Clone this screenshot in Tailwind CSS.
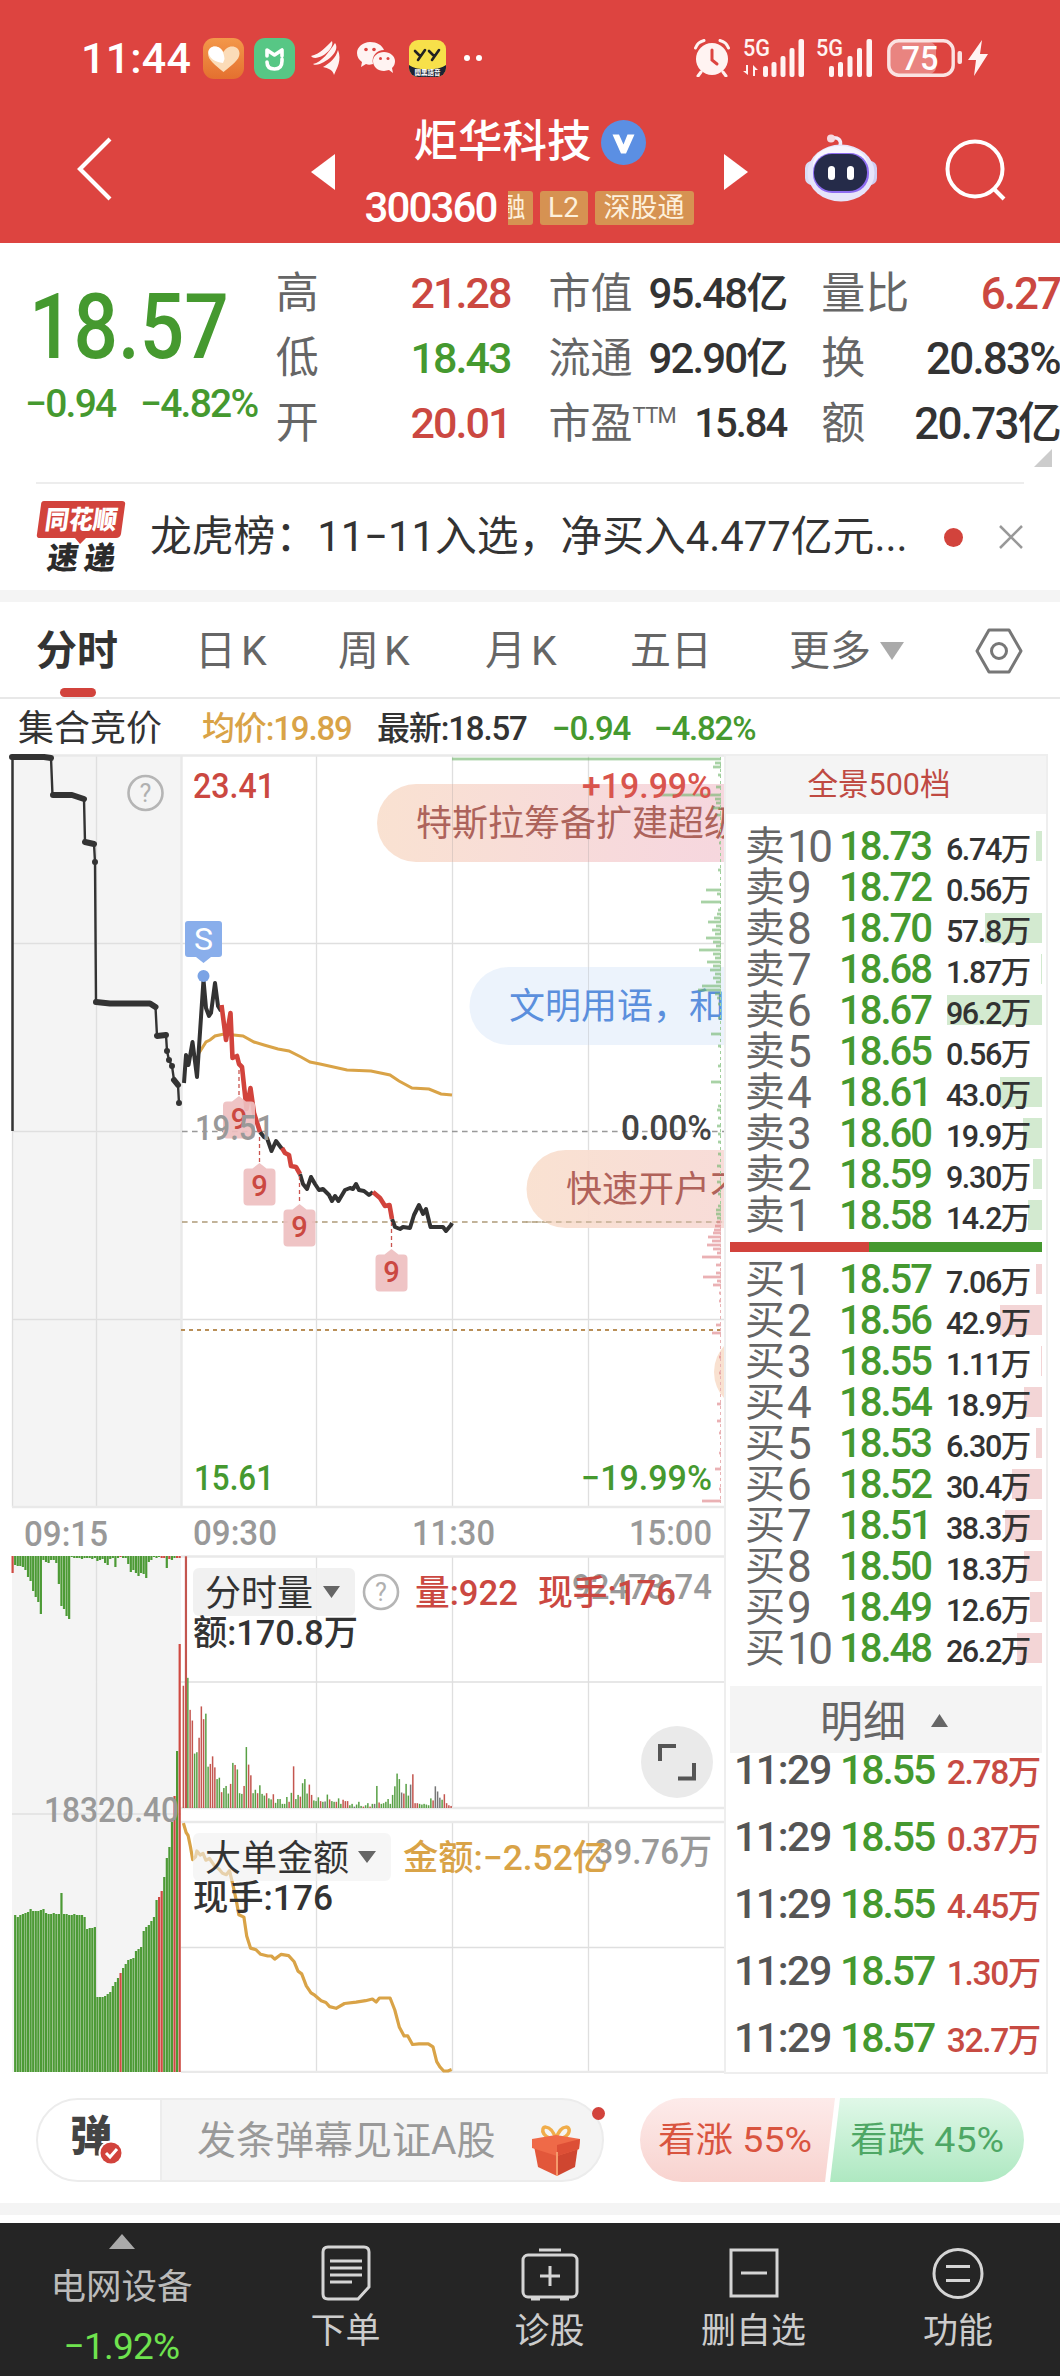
<!DOCTYPE html>
<html lang="zh-CN">
<head>
    <meta charset="UTF-8">
    <meta name="viewport" content="width=device-width, initial-scale=1.0">
    <title>炬华科技 300360</title>
    <script src="https://cdn.jsdelivr.net/npm/@tailwindcss/browser@4"></script>
    <style>
        body {
            font-family: Roboto, 'Noto Sans CJK SC', sans-serif;
        }
    </style>
</head>
<body class="w-[1060px] bg-white text-[#333] leading-none whitespace-nowrap overflow-x-hidden">

    <!-- Header -->
    <header class="h-[243px] bg-[#dd4440] text-white flex flex-col">
        <!-- Status bar -->
        <div class="h-[116px] pl-[81px] pr-[72px] flex items-center justify-between">
            <div class="flex items-center">
                <span class="w-[122px] text-[43px] font-medium tracking-[0.005em]">11:44</span>
                <svg class="w-[41px] h-[41px]" viewBox="0 0 41 41">
                    <defs><linearGradient id="heartBg" x1="0" y1="0" x2="0" y2="1"><stop offset="0" stop-color="#f3984a"/><stop offset="1" stop-color="#e4702f"/></linearGradient></defs>
                    <rect width="41" height="41" rx="11" fill="url(#heartBg)"/>
                    <path d="M20.500 34C12 27 5 22 5 15.500C5 11 8 8.500 12 8.500C16 8.500 19 11 20.500 14C22 11 25 8.500 29 8.500C33 8.500 36.500 11 36.500 15.500C36.500 22 29 27 20.500 34Z" fill="#fbdcb8"/>
                    <path d="M5.500 14C6 10 9 8.500 12 8.500C17 8.500 21 13 21.500 21L20 25C12 24 5.500 20 5.500 14Z" fill="#fff"/>
                </svg>
                <svg class="ml-[10px] w-[41px] h-[41px]" viewBox="0 0 41 41">
                    <rect width="41" height="41" rx="11" fill="#57c785"/>
                    <path d="M13 18V12L20.500 17L28 12V18M13 24C13 29 16 31 20.500 31C25.500 31 28 28 28 23V21" fill="none" stroke="#fff" stroke-width="3.600" stroke-linecap="round" stroke-linejoin="round"/>
                </svg>
                <svg class="ml-[15px] w-[32px] h-[36px]" viewBox="0 0 32 36" fill="#fff3f2">
                    <path d="M1 16C10 14 16 7 22 1C24 6 18 13 12 16C8 18 3 19 1 16ZM3 24C12 22 19 12 25 3C30 10 20 19 14 22C10 24 6 26 3 24ZM13 27C20 23 26 18 28 10C32 20 27 28 24 35C23 30 18 28 13 27Z"/>
                </svg>
                <svg class="ml-[15px] w-[38px] h-[34px]" viewBox="0 0 38 34" fill="#fff3f2">
                    <path d="M13 1C6 1 0 6 0 12C0 16 2 19 5 21L4 26L9 23C11 24 13 24 16 23C14 15 20 9 27 9C25 4 20 1 13 1Z"/>
                    <path d="M27 11C21 11 16 15 16 20C16 26 21 30 27 30L32 29L36 32L35 27C37 25 38 23 38 20C38 15 33 11 27 11Z"/>
                    <g fill="#dd4440"><circle cx="9" cy="8.500" r="1.800"/><circle cx="17" cy="8.500" r="1.800"/><circle cx="23.500" cy="17.500" r="1.500"/><circle cx="31" cy="17.500" r="1.500"/></g>
                </svg>
                <svg class="ml-[14px] w-[37px] h-[37px]" viewBox="0 0 37 37">
                    <defs><clipPath id="yyClip"><rect width="37" height="37" rx="9"/></clipPath></defs>
                    <g clip-path="url(#yyClip)">
                        <rect width="37" height="37" fill="#f7e04a"/>
                        <path d="M0 25C8 31 29 31 37 25V37H0Z" fill="#1c2233"/>
                    </g>
                    <path d="M6 11L11 16M16 10L9 20M20 11L25 16M30 10L23 20" stroke="#222" stroke-width="2.600" stroke-linecap="round" fill="none"/>
                    <text x="18.500" y="35" font-size="6.500" fill="#fff" text-anchor="middle" font-weight="700">開黑語音</text>
                </svg>
                <div class="ml-[18px] flex gap-[6px]">
                    <i class="w-[6px] h-[6px] rounded-full bg-white"></i>
                    <i class="w-[6px] h-[6px] rounded-full bg-white"></i>
                </div>
            </div>
            <div class="flex items-center">
                <svg class="w-[36px] h-[38px]" viewBox="0 0 36 38">
                    <circle cx="18" cy="20" r="16" fill="#fff3f2"/>
                    <path d="M1.500 9C3 5 6 2.500 10 1.500M34.500 9C33 5 30 2.500 26 1.500M7 33L4 37M29 33L32 37" stroke="#fff3f2" stroke-width="3" stroke-linecap="round"/>
                    <path d="M18 11V21L23 25" stroke="#dd4440" stroke-width="3" fill="none" stroke-linecap="round"/>
                </svg>
                <svg class="ml-[13px] w-[62px] h-[38px] overflow-visible" viewBox="0 0 62 38" fill="#fff3f2">
                    <text x="0" y="17" font-size="23" font-weight="500" textLength="27" lengthAdjust="spacingAndGlyphs">5G</text>
                    <path d="M5 26V36L0 32H3V26ZM10 37V26L15 31H12V37Z"/>
                    <rect x="20" y="27" width="5" height="11" rx="2"/><rect x="28.500" y="23" width="5" height="15" rx="2"/><rect x="37.500" y="17" width="5" height="21" rx="2"/><rect x="46.500" y="9" width="5" height="29" rx="2"/><rect x="55.500" y="0" width="5.500" height="38" rx="2"/>
                </svg>
                <svg class="ml-[11px] w-[58px] h-[38px] overflow-visible" viewBox="0 0 58 38" fill="#fff3f2">
                    <text x="0" y="17" font-size="23" font-weight="500" textLength="27" lengthAdjust="spacingAndGlyphs">5G</text>
                    <rect x="13" y="27" width="5" height="11" rx="2"/><rect x="22" y="23" width="5" height="15" rx="2"/><rect x="31.500" y="17" width="5" height="21" rx="2"/><rect x="41" y="9" width="5" height="29" rx="2"/><rect x="50.500" y="0" width="5.500" height="38" rx="2"/>
                </svg>
                <svg class="ml-[13px] w-[77px] h-[38px]" viewBox="0 0 77 38">
                    <rect x="3" y="3" width="46" height="32" rx="7" fill="#e98480"/>
                    <rect x="1.800" y="1.800" width="64.400" height="34.400" rx="10" fill="none" stroke="#fbe3e2" stroke-width="3.400"/>
                    <rect x="70.500" y="12" width="4.500" height="13" rx="2" fill="#fbe3e2"/>
                    <text x="33" y="30.500" text-anchor="middle" font-size="33" font-weight="500" fill="#fff" textLength="37" lengthAdjust="spacingAndGlyphs">75</text>
                </svg>
                <svg class="ml-[4px] w-[20px] h-[36px]" viewBox="0 0 20 36" fill="#fff3f2"><path d="M14 0L0 20H8L6 36L20 14H12Z"/></svg>
            </div>
        </div>
        <!-- Title bar -->
        <div class="h-[127px] flex items-center">
            <svg class="ml-[76px] mt-[-22px] w-[38px] h-[66px]" viewBox="0 0 38 66"><path d="M34 3L4 33L34 63" fill="none" stroke="#fff" stroke-width="4.200"/></svg>
            <svg class="ml-[197px] mt-[-16px] w-[24px] h-[36px]" viewBox="0 0 24 36"><path d="M24 0V36L0 18Z" fill="#fff"/></svg>
            <div class="w-[388px] h-full flex flex-col items-center">
                <div class="mt-[3px] ml-[1px] h-[46px] flex items-center gap-[9px]">
                    <span class="text-[44.500px] font-medium">炬华科技</span>
                    <svg class="w-[45px] h-[45px]" viewBox="0 0 45 45"><circle cx="22.500" cy="22.500" r="22.500" fill="#5b8fe3"/><path d="M11.500 14.500H18L22.500 24.500L26.500 14.500H33.500L25 33.500H20Z" fill="#fff"/></svg>
                </div>
                <div class="mt-[22px] flex items-center text-[#fdf0dc]">
                    <span class="w-[143px] text-[42px] text-white font-medium tracking-[-0.045em]">300360</span>
                    <span class="w-[25px] h-[34px] bg-[#d69252] rounded-r-[3px] overflow-hidden flex items-center text-[27px]"><b class="ml-[-9px] font-normal">融</b></span>
                    <span class="ml-[7px] w-[48px] h-[34px] bg-[#d69252] rounded-[3px] flex items-center justify-center text-[28px]">L2</span>
                    <span class="ml-[7px] w-[99px] h-[34px] bg-[#d69252] rounded-[3px] flex items-center justify-center text-[27px]">深股通</span>
                </div>
            </div>
            <svg class="ml-[1px] mt-[-16px] w-[24px] h-[36px]" viewBox="0 0 24 36"><path d="M0 0V36L24 18Z" fill="#fff"/></svg>
            <svg class="ml-[56px] mt-[-24px] w-[74px] h-[68px]" viewBox="0 0 74 68">
                <path d="M36 12C38 6 34 3 28 4" fill="none" stroke="#f2ecfa" stroke-width="3.500" stroke-linecap="round"/>
                <circle cx="27" cy="4.500" r="4" fill="#f6d9e0"/>
                <rect x="1" y="27" width="14" height="24" rx="7" fill="#d9dcf5"/><rect x="59" y="27" width="14" height="24" rx="7" fill="#cfcdf0"/>
                <ellipse cx="37" cy="39" rx="33.500" ry="28.500" fill="#e6e4fa"/>
                <ellipse cx="36" cy="30" rx="27" ry="18" fill="#f7f6ff"/>
                <rect x="9" y="19" width="56" height="40" rx="19" fill="#8d6cf0"/>
                <rect x="10" y="20" width="53" height="37" rx="18" fill="#252b49"/>
                <rect x="24" y="32" width="7" height="14" rx="3.500" fill="#fff"/><rect x="43" y="32" width="7" height="14" rx="3.500" fill="#fff"/>
            </svg>
            <svg class="ml-[66px] mt-[-19px] w-[64px] h-[64px]" viewBox="0 0 64 64" fill="none" stroke="#fff" stroke-width="4"><circle cx="31" cy="31" r="27.500"/><path d="M49 50L60 61"/></svg>
        </div>
    </header>

    <!-- Quote -->
    <section class="h-[239px] relative flex">
        <div class="w-[276px] text-[#45992f] font-medium">
            <div class="mt-[40px] ml-[29px] text-[90px] w-[230px] origin-left scale-x-[0.87]">18.57</div>
            <div class="mt-[12px] ml-[25px] flex text-[39px] tracking-[-0.045em]"><span class="w-[115px]">−0.94</span><span>−4.82%</span></div>
        </div>
        <div class="mt-[18px] w-[235px] flex flex-col text-[43px]">
            <div class="h-[65px] flex items-center justify-between"><span class="text-[#666]">高</span><span class="text-[#cb4841] font-medium tracking-[-0.045em]">21.28</span></div>
            <div class="h-[65px] flex items-center justify-between"><span class="text-[#666]">低</span><span class="text-[#45992f] font-medium tracking-[-0.045em]">18.43</span></div>
            <div class="h-[65px] flex items-center justify-between"><span class="text-[#666]">开</span><span class="text-[#cb4841] font-medium tracking-[-0.045em]">20.01</span></div>
        </div>
        <div class="mt-[18px] ml-[38px] w-[238px] flex flex-col text-[42px]">
            <div class="h-[65px] flex items-center justify-between"><span class="text-[#666]">市值</span><span class="font-medium tracking-[-0.045em]">95.48亿</span></div>
            <div class="h-[65px] flex items-center justify-between"><span class="text-[#666]">流通</span><span class="font-medium tracking-[-0.045em]">92.90亿</span></div>
            <div class="h-[65px] flex items-center justify-between"><span class="text-[#666] flex">市盈<small class="text-[22px] mt-[2px] font-normal tracking-[-0.03em]">TTM</small></span><span class="font-medium text-[40px] tracking-[-0.05em]">15.84</span></div>
        </div>
        <div class="mt-[18px] ml-[35px] w-[239px] flex flex-col text-[44px]">
            <div class="h-[65px] flex items-center justify-between"><span class="text-[#666]">量比</span><span class="text-[#cb4841] font-medium tracking-[-0.045em]">6.27</span></div>
            <div class="h-[65px] flex items-center justify-between"><span class="text-[#666]">换</span><span class="font-medium tracking-[-0.04em]">20.83%</span></div>
            <div class="h-[65px] flex items-center justify-between"><span class="text-[#666]">额</span><span class="font-medium tracking-[-0.04em]">20.73亿</span></div>
        </div>
        <svg class="absolute right-[8px] top-[206px] w-[18px] h-[18px]" viewBox="0 0 18 18"><path d="M18 0V18H0Z" fill="#ccc"/></svg>
    </section>

    <!-- News strip -->
    <section class="mx-[36px] h-[108px] border-t-2 border-[#ededed] flex items-center">
        <svg class="w-[90px] h-[74px] overflow-visible" viewBox="0 0 90 74">
            <path d="M8 1H86Q90 1 89 5L85 34Q84 38 80 38H50L44 44L39 38H4Q0 38 1 34L5 5Q5 1 8 1Z" fill="#d2433c"/>
            <text transform="translate(8 29) skewX(-8)" font-size="26" font-weight="900" fill="#fff" textLength="72" lengthAdjust="spacingAndGlyphs">同花顺</text>
            <text transform="translate(10 69) skewX(-8)" font-size="31" font-weight="900" fill="#2b2b2b" textLength="68" lengthAdjust="spacing">速递</text>
        </svg>
        <div class="ml-[24px] w-[768px] text-[41.800px]">龙虎榜：11−11入选，净买入4.477亿元...</div>
        <i class="ml-[28px] mr-[35px] w-[19px] h-[19px] shrink-0 rounded-full bg-[#d2433c]"></i>
        <svg class="w-[26px] h-[26px] shrink-0" viewBox="0 0 26 26"><path d="M2 2L24 24M24 2L2 24" stroke="#999" stroke-width="2.500"/></svg>
    </section>
    <div class="h-[12px] bg-[#f4f4f4]"></div>

    <!-- Period tabs -->
    <nav class="h-[97px] pt-[3px] relative border-b-2 border-[#e8e8e8] flex items-center text-[41px] text-[#666]">
        <span class="ml-[36px] w-[159px] font-bold text-[#333]">分时</span>
        <span class="w-[143px] flex gap-[5px]">日<b class="font-normal">K</b></span>
        <span class="w-[147px] flex gap-[5px]">周<b class="font-normal">K</b></span>
        <span class="w-[145px] flex gap-[5px]">月<b class="font-normal">K</b></span>
        <span class="w-[159px]">五日</span>
        <span class="w-[91px]">更多</span>
        <svg class="w-[24px] h-[18px]" viewBox="0 0 24 18"><path d="M0 0H24L12 18Z" fill="#aaa"/></svg>
        <svg class="ml-[70px] w-[50px] h-[48px]" viewBox="0 0 50 48" fill="none" stroke="#777" stroke-width="3"><path d="M15 3H35L47 24L35 45H15L3 24Z" stroke-linejoin="round"/><circle cx="25" cy="24" r="7.500"/></svg>
        <i class="absolute left-[60px] bottom-0 w-[36px] h-[9px] rounded-full bg-[#d2433c]"></i>
    </nav>

    <!-- Chart legend -->
    <div class="h-[55px] pt-[4px] pl-[18px] flex items-center text-[33px] font-medium tracking-[-0.035em]">
        <span class="w-[184px] text-[36px] font-normal tracking-normal">集合竞价</span>
        <span class="w-[175px] text-[#d9a347]">均价:19.89</span>
        <span class="w-[175px]">最新:18.57</span>
        <span class="w-[102px] text-[#45992f]">−0.94</span>
        <span class="text-[#45992f]">−4.82%</span>
    </div>

    <!-- Charts and order book -->
    <main class="h-[1320px] flex">
        <svg class="w-[724px] h-[1319px] shrink-0" viewBox="0 754 724 1319" font-size="35" font-weight="500">
            <defs>
                <linearGradient id="pillWarm"><stop offset="0" stop-color="#f9e0cf"/><stop offset="0.700" stop-color="#f6d6dc"/><stop offset="1" stop-color="#f5d3dc"/></linearGradient>
            </defs>
            <!-- backgrounds and grid -->
            <rect x="12" y="755" width="169" height="752" fill="#f4f4f4"/>
            <rect x="12" y="1556" width="169" height="516" fill="#f4f4f4"/>
            <path d="M12.500 755V1507M96.500 755V1507M316.500 755V1507M452.500 755V1507M588.500 755V1507M96.500 1556V2072M316.500 1556V1808M452.500 1556V1808M588.500 1556V1808M316.500 1822V2072M452.500 1822V2072M588.500 1822V2072M12 943.500H724M12 1131.500H181M12 1319.500H724M181 1682H724M12 1814H181M181 1947.500H724" stroke="#dfdfdf" stroke-width="1.300"/>
            <path d="M12 755.500H724M12 1507H724M181 1556.500H724M181 1808H724M181 1822H724M181 2072H724M181.500 755V1507" stroke="#e9e9e9" stroke-width="2.400"/>
            <path d="M182 1131.500H724" stroke="#999" stroke-width="1.600" stroke-dasharray="5.600 4.400"/>
            <path d="M182 1222H724" stroke="#ae9a78" stroke-width="1.600" stroke-dasharray="5.600 4.400"/>
            <path d="M181 1330H721" stroke="#b98f58" stroke-width="2" stroke-dasharray="4 4"/>

            <!-- call auction steps -->
            <path d="M12.500 1131V757" stroke="#333" stroke-width="2.500"/>
            <path d="M12 757L51 758L52.500 795L75 796L84 799L85 842L94 844L95 862L96 1002L150 1004L155.500 1007L157 1036L166 1035L167 1051L169 1060L172 1066L174 1080L178 1085L179 1103" fill="none" stroke="#333" stroke-width="2.400"/>
            <path d="M12 757H44L51 758M53 795H72L84 799M85 842L94 844M95 862V862.100M96 1002L110 1003.500H150L155.500 1007M157 1036L166 1035M167 1051V1051.100M169 1060V1060.100M172 1066V1066.100M174 1080L178 1085M179 1103V1103.100" fill="none" stroke="#333" stroke-width="6" stroke-linecap="round" stroke-linejoin="round"/>

            <!-- average and price -->
            <path d="M199 1053L206 1042L210 1040L215 1036L224 1034L243 1036L254 1042L264 1045L278 1049L289 1051L301 1057L310 1062L320 1064L347 1070L371 1071L390 1075L399 1081L412 1088L429 1089L441 1094L452 1095" fill="none" stroke="#d9a347" stroke-width="3"/>
            <g fill="none" stroke="#333" stroke-width="4" stroke-linejoin="round">
                <path d="M184 1083L186 1055L188.500 1065L192.500 1042L197 1077L203.500 980L206 1008L209 1016L211 1013L215 983L218 1006L221 1011"/>
                <path d="M260 1132L264 1137L267 1138L271.500 1151L276 1141L282 1149"/>
                <path d="M300 1174L303 1184L307 1189L311 1177L315 1184L319 1190L323 1189L329 1195L332 1201L335 1196L338.500 1201L345 1190L350 1188L353 1189L356 1184L359 1190L364 1191L369 1195L373 1192"/>
                <path d="M392 1219L395 1227L400 1229L403 1227L410 1228L414 1215L419 1205L423 1214L426 1209L430.500 1227L443 1227L446 1231L451 1225L452 1223"/>
            </g>
            <g fill="none" stroke="#d2433c" stroke-width="4.600" stroke-linejoin="round">
                <path d="M221.500 1005L226 1040L230.500 1013L232.500 1058L237 1056L239 1064L242 1067L246.500 1109L250.500 1088L254 1113L260 1132"/>
                <path d="M282 1148L285 1153L289 1155L291 1166L296 1167L300 1174"/>
                <path d="M373 1192L380 1198L385 1206L389.500 1205L392 1219"/>
            </g>
            <path d="M239 1070V1096M259.500 1137V1163M299.500 1176V1204M391.500 1222V1250" stroke="#c9544e" stroke-width="1.300" stroke-dasharray="4 3"/>
            <circle cx="203.500" cy="976" r="6" fill="#7aa3e5"/>
            <path d="M188 921H219Q222 921 222 924V954Q222 957 219 957H211L203.500 963L196 957H188Q185 957 185 954V924Q185 921 188 921Z" fill="#89aeeb"/>
            <text x="203.500" y="949.500" font-size="32" font-weight="400" text-anchor="middle" fill="#fff">S</text>
            <g id="nineMarks" text-anchor="middle" font-size="29" fill="#cb4841"></g>

            <!-- floating comments -->
            <rect x="377" y="784" width="420" height="78" rx="39" fill="url(#pillWarm)" opacity="0.950"/>
            <rect x="469.500" y="967" width="420" height="78" rx="39" fill="#ebf2fc" opacity="0.950"/>
            <rect x="526.500" y="1150" width="500" height="78" rx="39" fill="url(#pillWarm)" opacity="0.950"/>
            <rect x="714" y="1333" width="300" height="78" rx="39" fill="#f9e1d0"/>
            <path d="M452.500 784V862M588.500 784V862M588.500 967V1045" stroke="#999" stroke-opacity="0.250"/>
            <path d="M526 1222H724" stroke="#ae9a78" stroke-opacity="0.700" stroke-width="1.600" stroke-dasharray="5.600 4.400"/>
            <g font-size="36" font-weight="400">
                <text x="416" y="835.500" fill="#ad635b">特斯拉筹备扩建超级</text>
                <text x="509" y="1019" fill="#5b8fdd">文明用语，和</text>
                <text x="566" y="1202" fill="#b0625a">快速开户不</text>
            </g>
            <g id="depth"></g>

            <!-- axis labels -->
            <text x="193" y="797.500" fill="#cb4841" textLength="82" lengthAdjust="spacingAndGlyphs">23.41</text>
            <text x="582" y="797.500" fill="#d9544d" textLength="130" lengthAdjust="spacingAndGlyphs">+19.99%</text>
            <text x="195" y="1140" fill="#999" textLength="79" lengthAdjust="spacingAndGlyphs">19.51</text>
            <text x="621" y="1140" fill="#444" textLength="91" lengthAdjust="spacingAndGlyphs">0.00%</text>
            <text x="194" y="1490" fill="#45992f" textLength="80" lengthAdjust="spacingAndGlyphs">15.61</text>
            <text x="581" y="1490" fill="#45992f" textLength="131" lengthAdjust="spacingAndGlyphs">−19.99%</text>
            <text x="24" y="1546" fill="#999" textLength="84" lengthAdjust="spacingAndGlyphs">09:15</text>
            <text x="193" y="1545" fill="#999" textLength="84" lengthAdjust="spacingAndGlyphs">09:30</text>
            <text x="412" y="1545" fill="#999" textLength="83" lengthAdjust="spacingAndGlyphs">11:30</text>
            <text x="629" y="1545" fill="#999" textLength="83" lengthAdjust="spacingAndGlyphs">15:00</text>
            <g fill="none" stroke="#b5b5b5" stroke-width="2.600"><circle cx="145.500" cy="793" r="17"/><circle cx="381" cy="1592" r="17"/></g>
            <g font-size="25" font-weight="400" fill="#b0b0b0" text-anchor="middle"><text x="145.500" y="802">?</text><text x="381" y="1601">?</text></g>

            <!-- volume bars -->
            <g id="bars"></g>

            <text x="44" y="1822" fill="#999" textLength="135" lengthAdjust="spacingAndGlyphs">18320.40</text>

            <!-- big order amount -->
            <path id="bigOrder" fill="none" stroke="#d9a347" stroke-width="3.200" stroke-linejoin="round"/>

            <rect x="193" y="1568" width="162" height="48" rx="6" fill="#f0f0f0" fill-opacity="0.900"/>
            <rect x="193" y="1833" width="198" height="48" rx="6" fill="#f0f0f0" fill-opacity="0.600"/>
            <path d="M323 1586H340L331.500 1598ZM358 1851H376L367 1863Z" fill="#666"/>
            <g font-weight="400" font-size="36" fill="#333">
                <text x="205" y="1605.500">分时量</text>
                <text x="205" y="1870.500">大单金额</text>
            </g>
            <text x="572" y="1599" fill="#999" textLength="140" lengthAdjust="spacingAndGlyphs">92473.74</text>
            <text x="576" y="1864" fill="#999" textLength="136" lengthAdjust="spacingAndGlyphs">−39.76万</text>
            <text x="415" y="1605" fill="#cb4841" textLength="103" lengthAdjust="spacingAndGlyphs">量:922</text>
            <text x="538" y="1605" fill="#cb4841" textLength="138" lengthAdjust="spacingAndGlyphs">现手:176</text>
            <text x="193" y="1645" fill="#333" textLength="165" lengthAdjust="spacingAndGlyphs">额:170.8万</text>
            <text x="403" y="1870" fill="#d9a347" textLength="205" lengthAdjust="spacingAndGlyphs">金额:−2.52亿</text>
            <text x="193" y="1910" fill="#333" textLength="140" lengthAdjust="spacingAndGlyphs">现手:176</text>

            <circle cx="677" cy="1762" r="36" fill="#eaeaea"/>
            <path d="M660 1761V1746H676M678 1778.500H694V1763" fill="none" stroke="#555" stroke-width="4"/>
        </svg>

        <!-- Order book -->
        <aside class="w-[324px] h-[1320px] border-2 border-[#eee] flex flex-col">
            <div class="h-[58px] pr-[14px] bg-[#f4f4f4] flex items-center justify-center text-[30.500px] text-[#bf4a42]">全景500档</div>
            <div id="sells" class="pt-[13px] h-[430px]"></div>
            <div class="ml-[4px] mr-[16px] w-[312px] h-[10px] flex"><i class="w-[139px] bg-[#d2433c]"></i><i class="grow bg-[#45992f]"></i></div>
            <div id="buys" class="pt-[8px] h-[436px]"></div>
            <div class="ml-[4px] w-[312px] h-[67px] shrink-0 bg-[#f4f4f4] pt-[5px] pl-[90px] flex items-center text-[43px] text-[#666]">明细<svg class="ml-[25px] mt-[-3px] w-[17px] h-[13px]" viewBox="0 0 17 13"><path d="M8.500 0L17 13H0Z" fill="#666"/></svg></div>
            <div id="trades" class="mt-[-16px]"></div>
        </aside>
    </main>

    <!-- Comment box and poll -->
    <section class="h-[129px] px-[36px] pt-[24px] flex">
        <div class="relative w-[568px] h-[84px] rounded-full border-2 border-[#ececec] bg-[#f4f4f4] flex overflow-visible">
            <div class="w-[124px] h-full bg-white rounded-l-full border-r-2 border-[#ececec] flex items-center justify-center">
                <svg class="ml-[-4px] w-[54px] h-[52px] overflow-visible" viewBox="0 0 54 52">
                    <text x="0" y="37" font-size="42" font-weight="900" fill="#444">弹</text>
                    <circle cx="41" cy="39" r="12.500" fill="#fff"/><circle cx="41" cy="39" r="10.500" fill="#d2433c"/>
                    <path d="M36 39L40 43L47 35" fill="none" stroke="#fff" stroke-width="3"/>
                </svg>
            </div>
            <div class="pt-[2px] pl-[35px] flex items-center text-[39px] text-[#999]">发条弹幕见证A股</div>
            <svg class="absolute left-[492px] top-[22px] w-[52px] h-[56px]" viewBox="0 0 52 56">
                <path d="M26 17C20 0 9 4 14 12C17 16 22 17 26 17ZM26 17C31 0 43 4 38 12C35 16 30 17 26 17Z" fill="none" stroke="#f0ad4a" stroke-width="3.500"/>
                <path d="M4 24L27 30V54L8 45Z" fill="#e2573a"/><path d="M48 24L27 30V54L45 45Z" fill="#cf4630"/>
                <path d="M2 17L26 13L50 17L49 27L27 34L2 26Z" fill="#ef6a48"/><path d="M27 23L50 17L49 27L27 34Z" fill="#dd4f36"/>
                <path d="M27 30V54" stroke="#f59a6c" stroke-width="2"/>
            </svg>
            <i class="absolute left-[554px] top-[7px] w-[13px] h-[13px] rounded-full bg-[#d2433c]"></i>
        </div>
        <svg class="ml-[36px] w-[384px] h-[84px]" viewBox="0 0 384 84">
            <defs>
                <linearGradient id="upBg" x1="0" y1="0" x2="0" y2="1"><stop offset="0" stop-color="#fdebea"/><stop offset="1" stop-color="#f8d3cf"/></linearGradient>
                <linearGradient id="downBg" x1="0" y1="0" x2="0" y2="1"><stop offset="0" stop-color="#e0f8e8"/><stop offset="1" stop-color="#aee8c1"/></linearGradient>
            </defs>
            <path d="M42 0H195L185 84H42A42 42 0 0 1 42 0Z" fill="url(#upBg)"/>
            <path d="M200 0H342A42 42 0 0 1 342 84H190Z" fill="url(#downBg)"/>
            <text x="18" y="54" font-size="35" fill="#d9543f" textLength="154" lengthAdjust="spacingAndGlyphs">看涨 55%</text>
            <text x="210" y="54" font-size="35" fill="#4ea765" textLength="154" lengthAdjust="spacingAndGlyphs">看跌 45%</text>
        </svg>
    </section>
    <div class="h-[12px] bg-[#f4f4f4]"></div>

    <!-- Bottom bar -->
    <footer class="mt-[8px] h-[153px] bg-[#252525] text-[#ccc] text-[35px] flex">
        <div class="w-[243px] flex flex-col items-center">
            <svg class="mt-[11px] w-[26px] h-[15px]" viewBox="0 0 26 15"><path d="M13 0L26 15H0Z" fill="#aaa"/></svg>
            <span class="mt-[21px] text-[35.500px] text-[#bbb]">电网设备</span>
            <span class="mt-[22px] text-[37px] text-[#6fe34f] tracking-[-0.02em]">−1.92%</span>
        </div>
        <div class="w-[205px] flex flex-col items-center">
            <svg class="mt-[22px] w-[50px] h-[56px]" viewBox="0 0 50 56" fill="none" stroke="#d5d5d5" stroke-width="3"><path d="M7 2H43Q48 2 48 7V42L37 54H7Q2 54 2 49V7Q2 2 7 2ZM9 16H41M9 23H41M9 30H41M9 37H31"/></svg>
            <span class="mt-[13px]">下单</span>
        </div>
        <div class="w-[203px] flex flex-col items-center">
            <svg class="mt-[22px] w-[60px] h-[56px]" viewBox="0 0 60 56" fill="none" stroke="#d5d5d5" stroke-width="3"><rect x="3" y="10" width="54" height="42" rx="5"/><path d="M19 5H41M30 21V41M20 31H40M11 54H20M40 54H49"/></svg>
            <span class="mt-[13px]">诊股</span>
        </div>
        <div class="w-[205px] flex flex-col items-center">
            <svg class="mt-[22px] w-[52px] h-[56px]" viewBox="0 0 52 56" fill="none" stroke="#d5d5d5" stroke-width="3"><rect x="3" y="5" width="46" height="46"/><path d="M13 28H39"/></svg>
            <span class="mt-[13px]">删自选</span>
        </div>
        <div class="w-[204px] flex flex-col items-center">
            <svg class="mt-[22px] w-[54px] h-[56px]" viewBox="0 0 54 56" fill="none" stroke="#d5d5d5" stroke-width="3"><circle cx="27" cy="28.500" r="24"/><path d="M15 21.500H39M15 35.500H39"/></svg>
            <span class="mt-[13px]">功能</span>
        </div>
    </footer>

    <script>
        const GREEN = '#4c9a35', RED = '#cf4a42', GRAY = '#777';
        const rect = (x, y, w, h, fill) => `<rect x="${x}" y="${y}" width="${w}" height="${h}" fill="${fill}"/>`;

        // [level, price, volume, bar width]
        const sells = [['卖10','18.73','6.74万',6],['卖9','18.72','0.56万',0],['卖8','18.70','57.8万',57],['卖7','18.68','1.87万',1],['卖6','18.67','96.2万',95],['卖5','18.65','0.56万',0],['卖4','18.61','43.0万',42],['卖3','18.60','19.9万',19],['卖2','18.59','9.30万',9],['卖1','18.58','14.2万',14]];
        const buys = [['买1','18.57','7.06万',6],['买2','18.56','42.9万',42],['买3','18.55','1.11万',1],['买4','18.54','18.9万',18],['买5','18.53','6.30万',6],['买6','18.52','30.4万',30],['买7','18.51','38.3万',37],['买8','18.50','18.3万',18],['买9','18.49','12.6万',12],['买10','18.48','26.2万',25]];
        const row = (r, bar) => `
            <div class="relative h-[41px] pl-[19px] flex items-center">
                <i class="absolute right-[4px] top-[4px] h-[30px] ${bar}" style="width:${r[3]}px"></i>
                <span class="relative w-[94px] text-[40px] text-[#666] flex items-center">${r[0][0]}<b class="font-normal text-[44px] tracking-[-0.08em] ml-[2px]">${r[0].slice(1)}</b></span>
                <span class="relative w-[92px] text-[40px] font-medium text-[#45992f] tracking-[-0.05em]">${r[1]}</span>
                <span class="relative w-[99px] text-right text-[30.500px] font-medium tracking-[-0.045em] pt-[6px]">${r[2]}</span>
            </div>`;
        document.getElementById('sells').innerHTML = sells.map(r => row(r, 'bg-[#d3ead0]')).join('');
        document.getElementById('buys').innerHTML = buys.map(r => row(r, 'bg-[#f3d5d6]')).join('');

        const trades = [['18.55','2.78万'],['18.55','0.37万'],['18.55','4.45万'],['18.57','1.30万'],['18.57','32.7万']];
        document.getElementById('trades').innerHTML = trades.map(t => `
            <div class="h-[67px] pl-[8px] flex items-center font-medium">
                <span class="w-[106px] text-[41px] text-[#555] tracking-[-0.035em]">11:29</span>
                <span class="w-[92px] text-[41px] text-[#45992f] tracking-[-0.05em]">${t[0]}</span>
                <span class="w-[108px] text-right text-[33.500px] text-[#c74b43] tracking-[-0.04em] pt-[5px]">${t[1]}</span>
            </div>`).join('');

        // TD sequence marks: [centre x, tip y]
        document.getElementById('nineMarks').innerHTML = [[239,1096],[259.5,1163],[299.5,1204],[391.5,1249]].map(([x, y]) =>
            `<path d="M${x} ${y}l7 5.500h5q4 0 4 4v29q0 4 -4 4h-24q-4 0 -4 -4v-29q0 -4 4 -4h5z" fill="#eebfc0" fill-opacity="0.920"/><text x="${x}" y="${y + 33}">9</text>`).join('');

        // Order depth along the right edge: [y, length]
        const green = [[759,269],[763,6],[767,8],[775,3],[787,5],[795,60],[799,6],[803,5],[808,8],[815,4],[843,2],[870,3],[890,15],[894,4],[902,20],[910,3],[914,4],[918,7],[922,13],[926,5],[930,9],[934,6],[938,15],[942,8],[946,5],[950,22],[954,8],[958,6],[962,14],[966,8],[970,11],[974,6],[978,8],[982,5],[986,19],[990,23],[994,6],[998,4],[1004,3],[1018,3],[1034,10],[1046,3],[1066,3],[1082,10],[1106,3],[1110,4],[1118,3],[1126,4],[1134,3],[1142,3],[1154,3],[1166,4],[1182,4],[1194,3],[1206,3],[1210,5],[1214,5],[1218,4]];
        const pink = [[1222,4],[1226,6],[1230,7],[1233,8],[1237,13],[1241,9],[1245,14],[1249,8],[1253,4],[1257,19],[1265,5],[1273,5],[1277,18],[1281,4],[1285,8],[1293,2],[1301,2],[1325,5],[1333,9],[1357,2],[1373,2],[1404,4],[1421,4],[1433,2],[1453,2],[1469,6],[1489,2],[1501,19]];
        document.getElementById('depth').innerHTML =
            green.map(([y, l]) => rect(721 - l, y - 1.4, l, 2.8, 'rgba(110,180,105,0.6)')).join('') +
            pink.map(([y, l]) => rect(721 - l, y - 1.4, l, 2.8, 'rgba(220,125,130,0.6)')).join('') +
            '<path d="M720.500 757V1220" stroke="#9fcf9b" stroke-dasharray="3 3"/><path d="M720.500 1220V1503" stroke="#e9b3b5" stroke-dasharray="3 3"/>';

        let bars = '';
        // Auction, unmatched volume (hangs from the top)
        const unmatched = [17,9,10,10,11,14,21,25,35,41,46,58,4,6,7,4,4,7,28,50,53,60,63,1,2,2,2,3,2,2,2,3,2,5,4,3,7,9,3,2,11,2,1,2,2,8,16,14,17,20,17,18,22,6,4,1,2,1,2,2,12,3,4,2,2,2];
        const unmatchedRed = [0,42,58,59,61,64,65];
        unmatched.forEach((h, i) => bars += rect(11.5 + i * 2.57, 1556, 2.2, h, unmatchedRed.includes(i) ? RED : GREEN));
        // Auction, matched volume
        const matched = [157,155,157,158,159,160,163,161,161,161,162,163,159,158,158,159,158,158,179,158,158,157,157,158,157,157,157,155,143,144,144,145,75,75,75,76,78,80,86,90,94,99,104,108,112,113,114,121,123,125,141,145,147,151,155,172,175,181,195,214,225,250,276,321,428];
        const matchedRed = [41,56,57,62,64];
        matched.forEach((h, i) => bars += rect(14.1 + i * 2.57, 2072 - h, 2.2, h, matchedRed.includes(i) ? RED : GREEN));
        // Minute volume
        const vol = [355,731,378,285,254,158,162,204,295,258,274,120,128,150,118,84,88,46,58,64,42,70,131,125,112,43,41,64,177,126,95,43,53,43,66,41,36,43,28,25,40,15,26,26,12,12,32,18,44,121,26,38,33,72,84,42,68,38,22,20,31,20,18,19,39,25,20,18,18,28,12,24,20,20,8,12,4,10,18,6,4,8,14,4,12,12,64,16,12,14,18,26,12,38,63,100,84,45,42,70,36,68,98,14,14,12,10,12,10,8,28,22,63,48,30,24,40,14,8,6];
        const volRed = [0,1,3,4,7,8,9,12,13,14,17,21,23,27,29,30,33,37,40,47,49,52,56,57,61,65,68,71,72,73,80,83,87,98,102,103,104,111,116,117,118,119];
        const volGray = [63,76,85,97,101,112,113,114];
        vol.forEach((h, i) => {
            const c = volRed.includes(i) ? '#c4564f' : volGray.includes(i) ? GRAY : '#58a045';
            bars += rect(182.6 + i * 2.25, 1808 - h / 2.904, i === 1 ? 2.2 : 1.5, h / 2.904, c);
        });
        document.getElementById('bars').innerHTML = bars;

        const order = [[394,822],[400,850],[404,858],[409,890],[414,928],[420,920],[423,903],[430,915],[436,910],[442,930],[450,925],[460,945],[470,955],[478,968],[486,972],[493,960],[500,1000],[508,1050],[513,1088],[524,1095],[530,1150],[538,1185],[550,1190],[560,1203],[575,1208],[583,1208],[590,1217],[604,1203],[620,1207],[632,1225],[640,1252],[648,1260],[658,1295],[668,1315],[676,1322],[690,1338],[700,1343],[708,1355],[722,1360],[740,1346],[765,1342],[785,1338],[800,1333],[808,1342],[815,1330],[838,1330],[848,1365],[858,1415],[868,1440],[876,1440],[886,1465],[900,1463],[920,1463],[930,1472],[938,1515],[945,1530],[953,1542],[962,1542],[970,1538]];
        document.getElementById('bigOrder').setAttribute('d', 'M' + order.map(([x, y]) => `${(x / 2.148).toFixed(1)} ${(1540 + y / 2.904).toFixed(1)}`).join('L'));
    </script>
</body>
</html>
